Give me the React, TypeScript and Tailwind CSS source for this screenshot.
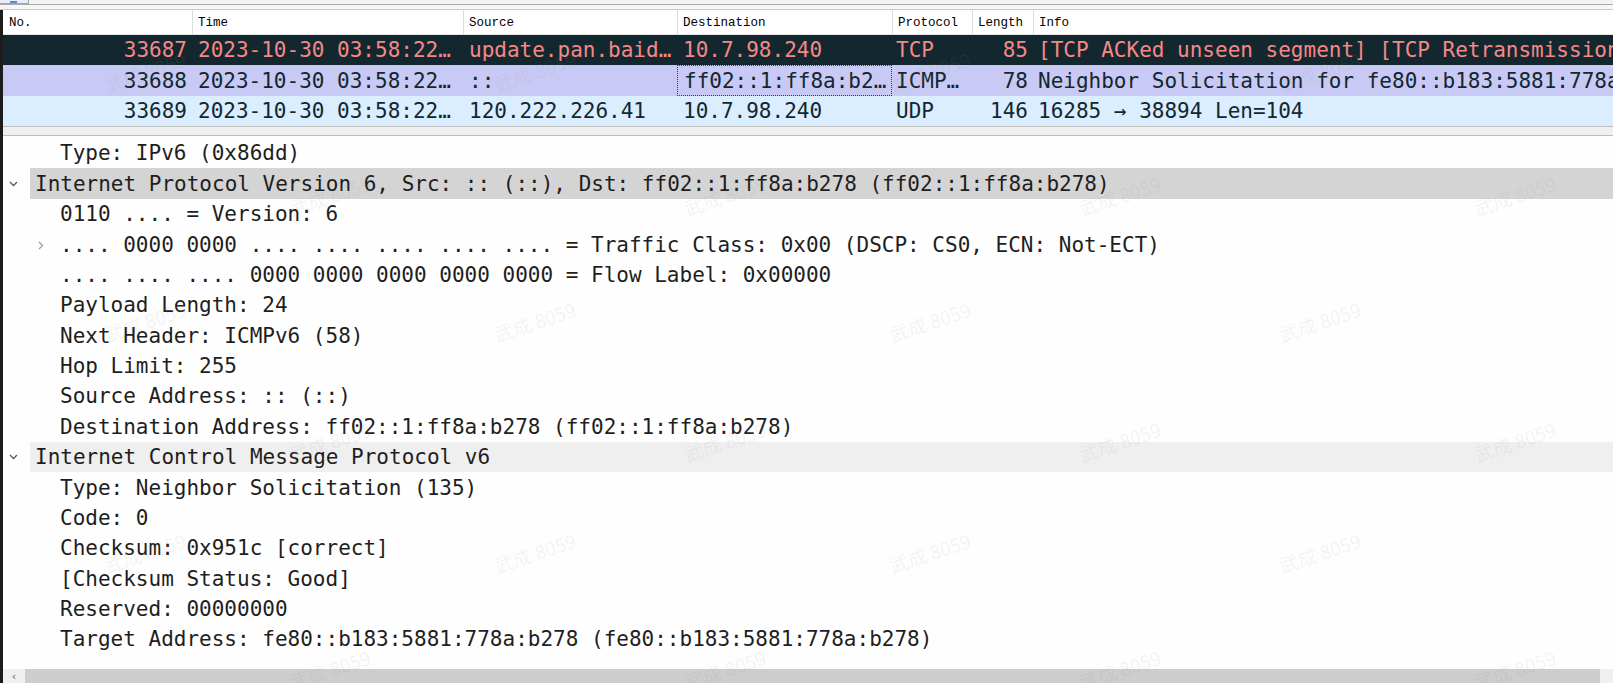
import React from "react";

type Packet = {
	no: string;
	time: string;
	src: string;
	dst: string;
	proto: string;
	len: string;
	info: string;
	row: string;
	focus?: boolean;
};

const packets: Packet[] = [
	{
		no: "33687",
		time: "2023-10-30 03:58:22…",
		src: "update.pan.baid…",
		dst: "10.7.98.240",
		proto: "TCP",
		len: "85",
		info: "[TCP ACKed unseen segment] [TCP Retransmission]",
		row: "bg-[#12272e] text-[#f78787]",
	},
	{
		no: "33688",
		time: "2023-10-30 03:58:22…",
		src: "::",
		dst: "ff02::1:ff8a:b2…",
		proto: "ICMP…",
		len: "78",
		info: "Neighbor Solicitation for fe80::b183:5881:778a:b278 from 00:00:00:00:00:00",
		row: "bg-[#c9c9f5] text-[#12272e]",
		focus: true,
	},
	{
		no: "33689",
		time: "2023-10-30 03:58:22…",
		src: "120.222.226.41",
		dst: "10.7.98.240",
		proto: "UDP",
		len: "146",
		info: "16285 → 38894 Len=104",
		row: "bg-[#daeeff] text-[#12272e]",
	},
];

type Line = {
	text: string;
	top?: boolean;
	band?: string;
	collapsed?: boolean;
};

const details: Line[] = [
	{ text: "Type: IPv6 (0x86dd)" },
	{
		text: "Internet Protocol Version 6, Src: :: (::), Dst: ff02::1:ff8a:b278 (ff02::1:ff8a:b278)",
		top: true,
		band: "bg-[#d4d4d4]",
	},
	{ text: "0110 .... = Version: 6" },
	{
		text: ".... 0000 0000 .... .... .... .... .... = Traffic Class: 0x00 (DSCP: CS0, ECN: Not-ECT)",
		collapsed: true,
	},
	{ text: ".... .... .... 0000 0000 0000 0000 0000 = Flow Label: 0x00000" },
	{ text: "Payload Length: 24" },
	{ text: "Next Header: ICMPv6 (58)" },
	{ text: "Hop Limit: 255" },
	{ text: "Source Address: :: (::)" },
	{ text: "Destination Address: ff02::1:ff8a:b278 (ff02::1:ff8a:b278)" },
	{ text: "Internet Control Message Protocol v6", top: true, band: "bg-[#efefef]" },
	{ text: "Type: Neighbor Solicitation (135)" },
	{ text: "Code: 0" },
	{ text: "Checksum: 0x951c [correct]" },
	{ text: "[Checksum Status: Good]" },
	{ text: "Reserved: 00000000" },
	{ text: "Target Address: fe80::b183:5881:778a:b278 (fe80::b183:5881:778a:b278)" },
];

const headers = ["No.", "Time", "Source", "Destination", "Protocol", "Length", "Info"];

const cols = "grid grid-cols-[188px_271px_214px_215px_80px_61px_1fr]";

function ChevronDown() {
	return (
		<svg width="9" height="6" viewBox="0 0 9 6">
			<polyline points="1,1 4.5,4.5 8,1" fill="none" stroke="#5a5a5a" strokeWidth="1.3" />
		</svg>
	);
}

function ChevronRight() {
	return (
		<svg width="6" height="9" viewBox="0 0 6 9">
			<polyline points="1,1 4.5,4.5 1,8" fill="none" stroke="#9a9a9a" strokeWidth="1.2" />
		</svg>
	);
}

// faint tiled watermark, alternate rows shifted
const marks: { x: number; y: number }[] = [];
[72, 196, 322, 442, 553, 670].forEach((y, r) => {
	const xs = r % 2 === 0 ? [145, 535, 930, 1320] : [330, 725, 1120, 1515];
	xs.forEach((x) => marks.push({ x, y }));
});

export default function App() {
	return (
		<div className="relative w-[1613px] h-[683px] overflow-hidden bg-white flex flex-col">
			{/* toolbar strip */}
			<div className="h-[4px] flex bg-[#f3f3f3]">
				<div className="w-[29px] h-full border-r border-b border-[#9aa6b4] bg-[#e8eef7] flex items-end pl-[10px]">
					<div className="w-[7px] h-[2px] bg-[#5b8bd0]" />
				</div>
			</div>
			<div className="h-[1px] bg-[#a9a9a9]" />
			<div className="h-[4px] bg-[#f7f7f7]" />
			<div className="h-[1px] bg-[#c9c9c9]" />

			<div className="flex-1 flex flex-col border-l-[3px] border-[#1c1c1c]">
				{/* packet list */}
				<div className={`${cols} h-[25px] pl-[1px] bg-white border-b border-[#e3e3e3] font-['Liberation_Mono',monospace] text-[12.5px] text-black`}>
					{headers.map((h, i) => (
						<div
							key={h}
							className={`flex items-center px-[5px] pt-[3px] ${i > 0 ? "border-l border-[#dcdcdc]" : ""}`}
						>
							{h}
						</div>
					))}
				</div>
				{packets.map((p) => (
					<div
						key={p.no}
						className={`${cols} h-[30.33px] pl-[1px] pt-[2px] ${p.row} font-['DejaVu_Sans_Mono',monospace] text-[21px] whitespace-nowrap`}
					>
						<div className="flex items-center justify-end px-[5px] overflow-hidden">{p.no}</div>
						<div className="flex items-center px-[6px] overflow-hidden">{p.time}</div>
						<div className="flex items-center px-[6px] overflow-hidden">{p.src}</div>
						<div
							className={`flex items-center px-[6px] -mt-[2px] pt-[2px] overflow-hidden ${
								p.focus ? "border border-dotted border-[#3a3a3a]" : ""
							}`}
						>
							{p.dst}
						</div>
						<div className="flex items-center px-[4px] overflow-hidden">{p.proto}</div>
						<div className="flex items-center justify-end px-[5px] overflow-hidden">{p.len}</div>
						<div className="flex items-center px-[5px] overflow-hidden">{p.info}</div>
					</div>
				))}

				{/* splitter */}
				<div className="h-[10px] bg-[#f0f0f0] border-y border-[#bdbdbd]" />

				{/* packet details */}
				<div className="flex-1 pt-[2px] bg-[#fefefe] font-['DejaVu_Sans_Mono',monospace] text-[21px] text-[#1e1e1e] whitespace-nowrap">
					{details.map((d, i) => (
						<div key={i} className="flex h-[30.375px]">
							<div className="w-[27px] flex items-center pl-[6px]">{d.top && <ChevronDown />}</div>
							<div className={`flex-1 flex items-center pt-[2px] ${d.band ?? ""}`}>
								{d.top ? (
									<div className="w-[5px]" />
								) : (
									<div className="w-[30px] flex items-center pl-[8px]">
										{d.collapsed && <ChevronRight />}
									</div>
								)}
								<span>{d.text}</span>
							</div>
						</div>
					))}
				</div>

				{/* horizontal scrollbar */}
				<div className="h-[14px] flex bg-[#f0f0f0]">
					<div className="w-[22px] flex items-center justify-center text-[#606060] font-['DejaVu_Sans',sans-serif] text-[11px] leading-none">
						‹
					</div>
					<div className="w-[1575px] bg-[#cdcdcd]" />
					<div className="flex-1" />
				</div>
			</div>

			{/* watermark overlay */}
			<div className="absolute inset-0 pointer-events-none">
				{marks.map((m, i) => (
					<span
						key={i}
						className="absolute -translate-x-1/2 -translate-y-1/2 -rotate-[18deg] font-['Noto_Sans_CJK_SC',sans-serif] text-[19px] text-[#8a8a8a]/10 whitespace-nowrap"
						style={{ left: m.x, top: m.y }}
					>
						武成 8059
					</span>
				))}
			</div>
		</div>
	);
}
